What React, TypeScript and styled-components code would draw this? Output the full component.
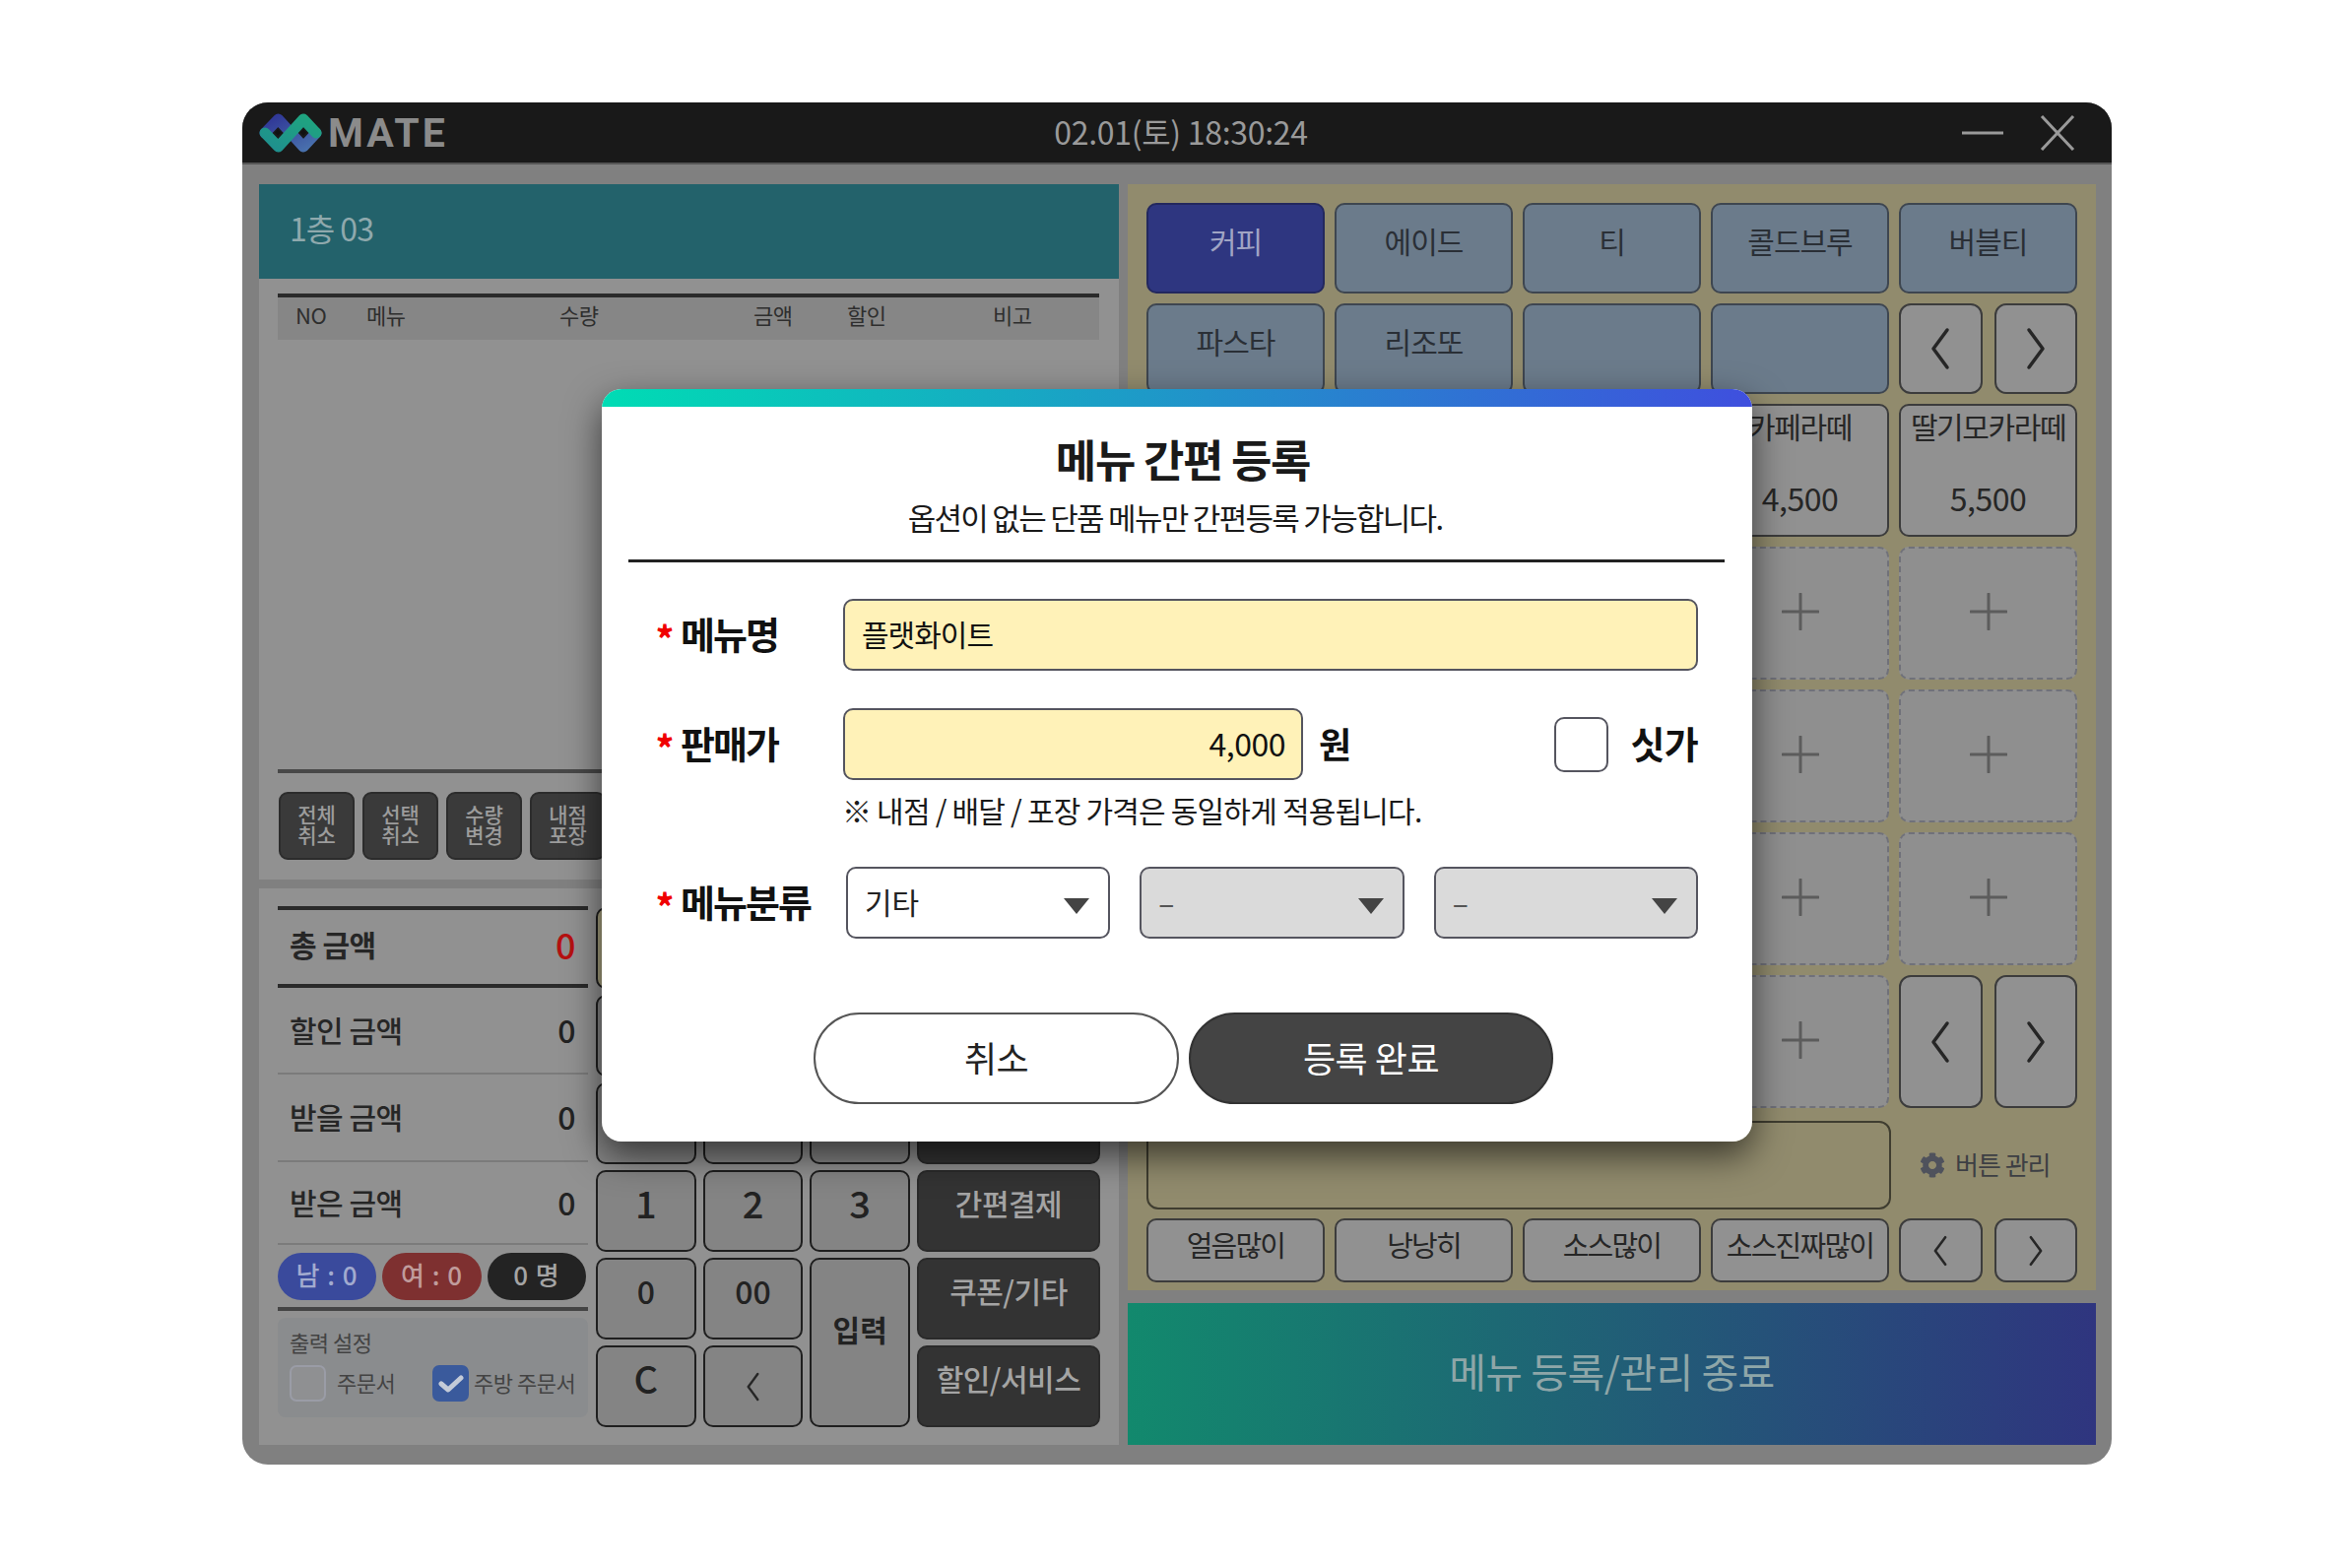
import styled, { createGlobalStyle } from "styled-components";
import { FaCog } from "react-icons/fa";

const GlobalStyle = createGlobalStyle`
  html, body {
    margin: 0;
    padding: 0;
    background: #fff;
  }
  * {
    box-sizing: border-box;
  }
  body {
    font-family: "Noto Sans CJK KR", "Noto Sans", sans-serif;
  }
`;

const Page = styled.div`
  width: 2388px;
  height: 1592px;
  padding: 104px 244px 0 246px;
  background: #fff;
`;

const Window = styled.div`
  position: relative;
  width: 1898px;
  height: 1383px;
  border-radius: 26px;
  background: #808080;
  overflow: hidden;
`;

const TitleBar = styled.div`
  height: 63px;
  display: grid;
  grid-template-columns: 1fr auto 1fr;
  align-items: center;
  padding: 0 37px 0 17px;
  background: #191919;
  border-bottom: 2px solid #555;
`;

const Brand = styled.div`
  display: flex;
  align-items: center;
  gap: 6px;
  font-family: Roboto, sans-serif;
  font-weight: 700;
  font-size: 41px;
  letter-spacing: 3px;
  color: #8b8b8b;
`;

const Clock = styled.div`
  padding: 0 0 4px 28px;
  font-size: 32px;
  letter-spacing: -0.3px;
  color: #9a9a9a;
`;

const WindowControls = styled.div`
  display: flex;
  justify-content: flex-end;
  align-items: center;
  gap: 36px;
`;

const Body = styled.div`
  display: flex;
  gap: 9px;
  padding: 20px 16px 20px 17px;
`;

const LeftColumn = styled.div`
  width: 873px;
  display: flex;
  flex-direction: column;
  gap: 9px;
`;

const OrderPanel = styled.div`
  height: 706px;
  display: flex;
  flex-direction: column;
  background: #919191;
`;

const TableName = styled.div`
  height: 96px;
  display: flex;
  align-items: center;
  padding: 0 0 8px 31px;
  font-size: 32px;
  letter-spacing: -1px;
  color: #8fa9ad;
  background: #23626b;
`;

const TableHead = styled.div`
  height: 47px;
  margin: 15px 20px 0 19px;
  display: flex;
  align-items: center;
  padding-bottom: 10px;
  border-top: 4px solid #2a2a2a;
  background: #868686;
  font-size: 22px;
  letter-spacing: -0.5px;
  color: #2e2e2e;
`;

const HeadCell = styled.span<{ $w: number }>`
  width: ${(p) => p.$w}px;
  flex-shrink: 0;
`;

const OrderList = styled.div`
  flex: 1;
  margin: 0 20px 0 19px;
  border-bottom: 4px solid #484848;
`;

const OrderActions = styled.div`
  display: flex;
  gap: 8px;
  padding: 19px 20px 20px 20px;
`;

const ActionButton = styled.div`
  width: 77px;
  height: 69px;
  display: flex;
  align-items: center;
  justify-content: center;
  padding-bottom: 3px;
  text-align: center;
  border-radius: 9px;
  border: 2px solid #2c2c2c;
  background: #3a3a3a;
  color: #9c9c9c;
  font-size: 21px;
  font-weight: 500;
  line-height: 21px;
`;

const PayPanel = styled.div`
  height: 565px;
  display: flex;
  gap: 8px;
  padding: 18px 19px 0 19px;
  background: #919191;
`;

const Totals = styled.div`
  width: 315px;
  flex-shrink: 0;
  display: flex;
  flex-direction: column;
`;

const TotalRow = styled.div<{ $h: number; $strong?: boolean }>`
  height: ${(p) => p.$h}px;
  display: flex;
  align-items: center;
  justify-content: space-between;
  padding: 0 13px ${(p) => (p.$strong ? 8 : 3)}px 12px;
  border-top: ${(p) => (p.$strong ? "4px solid #2a2a2a" : "none")};
  border-bottom: ${(p) => (p.$strong ? "4px solid #2a2a2a" : "2px solid #7b7b7b")};
  font-size: 30px;
  font-weight: ${(p) => (p.$strong ? 700 : 500)};
  letter-spacing: -0.5px;
  color: #262626;
`;

const TotalValue = styled.span<{ $red?: boolean }>`
  font-size: ${(p) => (p.$red ? 36 : 32)}px;
  font-weight: 500;
  color: ${(p) => (p.$red ? "#b51111" : "#222")};
`;

const PillRow = styled.div`
  display: flex;
  gap: 6px;
  margin-top: 8px;
  padding-bottom: 7px;
  border-bottom: 4px solid #444;
`;

const Pill = styled.div<{ $bg: string; $fg: string; $w: number }>`
  width: ${(p) => p.$w}px;
  height: 48px;
  display: flex;
  align-items: center;
  justify-content: center;
  padding-bottom: 6px;
  border-radius: 24px;
  background: ${(p) => p.$bg};
  color: ${(p) => p.$fg};
  font-size: 26px;
  font-weight: 500;
  letter-spacing: 1px;
`;

const PrintBox = styled.div`
  height: 101px;
  margin-top: 7px;
  padding: 8px 12px 0 12px;
  border-radius: 8px;
  background: #8a8c8e;
  color: #434343;
  font-size: 22px;
  letter-spacing: -0.5px;
`;

const PrintOptions = styled.div`
  display: flex;
  align-items: center;
  margin-top: 8px;
`;

const PrintCheck = styled.div<{ $checked?: boolean }>`
  width: 37px;
  height: 37px;
  flex-shrink: 0;
  display: flex;
  align-items: center;
  justify-content: center;
  border-radius: 7px;
  border: 2px solid ${(p) => (p.$checked ? "#3a5a9c" : "#9a9ca6")};
  background: ${(p) => (p.$checked ? "#3a5a9c" : "#8f9092")};
`;

const PrintLabel = styled.span<{ $gap: number; $w?: number }>`
  margin-left: ${(p) => p.$gap}px;
  width: ${(p) => (p.$w ? `${p.$w}px` : "auto")};
  padding-bottom: 4px;
  white-space: nowrap;
`;

const Keypad = styled.div`
  flex: 1;
  display: grid;
  grid-template-columns: repeat(3, 1fr) 186px;
  grid-template-rows: repeat(6, 83px);
  column-gap: 7px;
  row-gap: 6px;
  margin-top: 1px;
`;

const Key = styled.div<{ $span?: number; $size?: number; $bold?: boolean; $tint?: boolean; $flat?: boolean }>`
  grid-row: span ${(p) => p.$span || 1};
  display: flex;
  align-items: center;
  justify-content: center;
  padding-bottom: ${(p) => (p.$flat ? 0 : p.$span ? 28 : 18)}px;
  border-radius: 10px;
  border: 2px solid #1f1f1f;
  background: ${(p) => (p.$tint ? "#a39d7c" : "#848484")};
  font-size: ${(p) => p.$size || 38}px;
  font-weight: ${(p) => (p.$bold ? 700 : 500)};
  color: #222;
`;

const WideKey = styled(Key)`
  grid-column: span 4;
`;

const DarkKey = styled.div`
  display: flex;
  align-items: center;
  justify-content: center;
  padding-bottom: 18px;
  border-radius: 10px;
  background: #333;
  border: 2px solid #2a2a2a;
  color: #a4a4a4;
  font-size: 30px;
  font-weight: 500;
  letter-spacing: -0.5px;
`;

const RightColumn = styled.div`
  width: 983px;
  display: flex;
  flex-direction: column;
  gap: 13px;
`;

const MenuPanel = styled.div`
  height: 1123px;
  display: flex;
  flex-direction: column;
  padding: 19px 19px 8px 19px;
  background: #918b6d;
`;

const MenuGrid = styled.div`
  display: grid;
  grid-template-columns: repeat(5, 1fr);
  grid-template-rows: 92px 92px repeat(5, 135px);
  gap: 10px;
`;

const Tab = styled.div<{ $active?: boolean }>`
  display: flex;
  align-items: center;
  justify-content: center;
  padding-bottom: 16px;
  border-radius: 10px;
  border: 2px solid ${(p) => (p.$active ? "#23285e" : "#3e4650")};
  background: ${(p) => (p.$active ? "#2e3680" : "#6b7b8b")};
  color: ${(p) => (p.$active ? "#a0a4c4" : "#2a2f36")};
  font-size: 30px;
  letter-spacing: -1px;
`;

const MenuCard = styled.div`
  display: flex;
  flex-direction: column;
  align-items: center;
  justify-content: space-between;
  padding: 0 0 18px;
  border-radius: 10px;
  border: 2px solid #3c3c3c;
  background: #919191;
  color: #262626;
  font-size: 30px;
  line-height: 40px;
  letter-spacing: -1.4px;
`;

const Price = styled.span`
  font-size: 32px;
  letter-spacing: -0.5px;
`;

const EmptySlot = styled.div`
  display: flex;
  align-items: center;
  justify-content: center;
  padding-bottom: 4px;
  border-radius: 10px;
  border: 2px dashed #70717a;
  background: #8f8f8f;
`;

const NavPair = styled.div`
  display: flex;
  gap: 12px;
`;

const NavButton = styled.div`
  flex: 1;
  display: flex;
  align-items: center;
  justify-content: center;
  border-radius: 12px;
  border: 2px solid #3c3c3c;
  background: #919191;
`;

const OptionArea = styled.div`
  display: flex;
  align-items: center;
  margin-top: 13px;
`;

const OptionBox = styled.div`
  width: 756px;
  height: 90px;
  border-radius: 12px;
  border: 2px solid #3f3d30;
`;

const ManageLink = styled.div`
  display: flex;
  align-items: center;
  gap: 10px;
  margin-left: 29px;
  padding-bottom: 4px;
  color: #3d3f44;
  font-size: 26px;
  letter-spacing: -1px;
  white-space: nowrap;

  svg {
    color: #4f525c;
    margin-top: 4px;
  }
`;

const OptionRow = styled.div`
  display: grid;
  grid-template-columns: repeat(5, 1fr);
  grid-template-rows: 65px;
  gap: 10px;
  margin-top: 9px;
`;

const OptionButton = styled.div`
  display: flex;
  align-items: center;
  justify-content: center;
  padding-bottom: 14px;
  border-radius: 10px;
  border: 2px solid #3c3c3c;
  background: #919191;
  color: #262626;
  font-size: 29px;
  letter-spacing: -1.8px;
  white-space: nowrap;
`;

const ExitBar = styled.div`
  height: 144px;
  display: flex;
  align-items: center;
  justify-content: center;
  padding-bottom: 8px;
  background: linear-gradient(90deg, #12896d 0%, #2f357f 100%);
  color: #8ea6a8;
  font-size: 41px;
  letter-spacing: -0.5px;
`;

const Modal = styled.div`
  position: absolute;
  left: 365px;
  top: 291px;
  width: 1168px;
  height: 764px;
  border-radius: 20px;
  background: #fff;
  overflow: hidden;
`;

const ModalShadow = styled.div`
  position: absolute;
  left: 365px;
  top: 291px;
  width: 1168px;
  height: 764px;
  border-radius: 20px;
  box-shadow: 0 14px 36px rgba(0, 0, 0, 0.6);
`;

const ModalBar = styled.div`
  height: 18px;
  background: linear-gradient(90deg, #00dcb4 0%, #3f4fde 100%);
`;

const ModalTitle = styled.h2`
  margin: 23px 0 0;
  padding-left: 12px;
  text-align: center;
  font-size: 45px;
  line-height: 60px;
  font-weight: 700;
  letter-spacing: -1.3px;
  color: #1a1a1a;
`;

const ModalSub = styled.p`
  margin: 9px 0 0;
  padding-right: 4px;
  text-align: center;
  font-size: 31px;
  line-height: 40px;
  letter-spacing: -1.7px;
  color: #1a1a1a;
`;

const ModalRule = styled.div`
  height: 3px;
  margin: 23px 28px 0 27px;
  background: #222;
`;

const Form = styled.div`
  padding: 37px 55px 0 55px;
`;

const FormRow = styled.div<{ $top?: number }>`
  display: flex;
  align-items: center;
  margin-top: ${(p) => p.$top || 0}px;
`;

const FieldLabel = styled.div`
  width: 190px;
  flex-shrink: 0;
  display: flex;
  align-items: center;
  gap: 9px;
  padding-bottom: 5px;
  font-size: 38px;
  font-weight: 700;
  letter-spacing: -2px;
  color: #111;
`;

const Star = styled.span`
  font-size: 34px;
  font-weight: 900;
  line-height: 1;
  padding-top: 10px;
  color: #f00000;
`;

const TextField = styled.div<{ $w?: number; $right?: boolean }>`
  flex: ${(p) => (p.$w ? "none" : 1)};
  width: ${(p) => (p.$w ? `${p.$w}px` : "auto")};
  height: 73px;
  display: flex;
  align-items: center;
  justify-content: ${(p) => (p.$right ? "flex-end" : "flex-start")};
  padding: 0 16px 4px 17px;
  border-radius: 10px;
  border: 2px solid #55555f;
  background: #fff2b8;
  font-size: ${(p) => (p.$right ? 32 : 30)}px;
  letter-spacing: ${(p) => (p.$right ? -0.5 : -1)}px;
  color: #111;
`;

const Unit = styled.span`
  margin-left: 16px;
  padding-bottom: 4px;
  font-size: 36px;
  font-weight: 700;
  color: #111;
`;

const TaxCheck = styled.div`
  width: 55px;
  height: 56px;
  margin-left: auto;
  border-radius: 10px;
  border: 2px solid #55555f;
  background: #fff;
`;

const TaxLabel = styled.span`
  margin-left: 22px;
  padding-bottom: 4px;
  font-size: 38px;
  font-weight: 700;
  letter-spacing: -0.7px;
  color: #111;
`;

const Note = styled.p`
  margin: 15px 0 0 189px;
  font-size: 30px;
  line-height: 30px;
  letter-spacing: -0.8px;
  color: #1a1a1a;
  white-space: nowrap;
`;

const SelectGroup = styled.div`
  flex: 1;
  display: flex;
  gap: 30px;
  margin-left: 3px;
`;

const SelectBox = styled.div<{ $disabled?: boolean }>`
  flex: 1;
  height: 73px;
  display: flex;
  align-items: center;
  justify-content: space-between;
  padding: 0 19px 4px 17px;
  border-radius: 10px;
  border: 2px solid #55555f;
  background: ${(p) => (p.$disabled ? "#dadada" : "#fff")};
  color: ${(p) => (p.$disabled ? "#555" : "#222")};
  font-size: 30px;
`;

const Caret = styled.span`
  width: 0;
  height: 0;
  margin-top: 10px;
  border-left: 13px solid transparent;
  border-right: 13px solid transparent;
  border-top: 16px solid #444;
`;

const ModalButtons = styled.div`
  display: flex;
  gap: 10px;
  margin: 75px 0 0 215px;
`;

const PillButton = styled.div<{ $dark?: boolean }>`
  width: ${(p) => (p.$dark ? 370 : 371)}px;
  height: 93px;
  display: flex;
  align-items: center;
  justify-content: center;
  padding-bottom: 4px;
  border-radius: 47px;
  border: 2px solid ${(p) => (p.$dark ? "#333" : "#555")};
  background: ${(p) => (p.$dark ? "#444" : "#fff")};
  color: ${(p) => (p.$dark ? "#fff" : "#222")};
  font-size: 36px;
  letter-spacing: -0.5px;
`;

function Logo() {
  return (
    <svg width="64" height="40" viewBox="0 0 64 40" fill="none">
      <defs>
        <linearGradient id="logoBlue" x1="0" y1="0" x2="1" y2="1">
          <stop offset="0" stopColor="#2f3596" />
          <stop offset="1" stopColor="#4a73ae" />
        </linearGradient>
        <linearGradient id="logoTeal" x1="0" y1="1" x2="1" y2="0">
          <stop offset="0" stopColor="#1f8f8e" />
          <stop offset="1" stopColor="#1fa57f" />
        </linearGradient>
      </defs>
      <path d="M6 20L19.5 6L45 34L58 20" stroke="url(#logoBlue)" strokeWidth="11" strokeLinejoin="round" strokeLinecap="round" />
      <path d="M6 20L19.5 34L45 6L58 20" stroke="url(#logoTeal)" strokeWidth="11" strokeLinejoin="round" strokeLinecap="round" />
      <path d="M19 16.5L22 19.5L19 22.5L16 19.5Z M45 16.5L48 19.5L45 22.5L42 19.5Z" fill="#111" />
    </svg>
  );
}

function Chevron({ dir, size = 44 }: { dir: "left" | "right"; size?: number }) {
  return (
    <svg width={size / 2} height={size} viewBox="0 0 22 44" fill="none">
      <path
        d={dir === "left" ? "M18 3L4 22L18 41" : "M4 3L18 22L4 41"}
        stroke="#262626"
        strokeWidth="3.5"
        strokeLinecap="round"
        strokeLinejoin="round"
      />
    </svg>
  );
}

function Plus() {
  return (
    <svg width="38" height="38" viewBox="0 0 38 38">
      <path d="M19 1V37M1 19H37" stroke="#5c5c5c" strokeWidth="3" strokeLinecap="round" />
    </svg>
  );
}

const headCells = [
  { label: "NO", w: 72 },
  { label: "메뉴", w: 196 },
  { label: "수량", w: 197 },
  { label: "금액", w: 95 },
  { label: "할인", w: 148 },
  { label: "비고", w: 60 },
];

const orderActions = [
  ["전체", "취소"],
  ["선택", "취소"],
  ["수량", "변경"],
  ["내점", "포장"],
];

const optionNames = ["얼음많이", "낭낭히", "소스많이", "소스진짜많이"];

function NavButtons({ size }: { size?: number }) {
  return (
    <NavPair>
      <NavButton><Chevron dir="left" size={size} /></NavButton>
      <NavButton><Chevron dir="right" size={size} /></NavButton>
    </NavPair>
  );
}

function SlotRow() {
  return (
    <>
      <EmptySlot />
      <EmptySlot />
      <EmptySlot />
      <EmptySlot><Plus /></EmptySlot>
    </>
  );
}

export default function App() {
  return (
    <Page>
      <GlobalStyle />
      <Window>
        <TitleBar>
          <Brand><Logo />MATE</Brand>
          <Clock>02.01(토) 18:30:24</Clock>
          <WindowControls>
            <svg width="44" height="6" viewBox="0 0 44 6">
              <path d="M1 3H43" stroke="#9a9a9a" strokeWidth="3" />
            </svg>
            <svg width="36" height="36" viewBox="0 0 36 36">
              <path d="M2 1L34 35M34 1L2 35" stroke="#9a9a9a" strokeWidth="3" />
            </svg>
          </WindowControls>
        </TitleBar>
        <Body>
          <LeftColumn>
            <OrderPanel>
              <TableName>1층 03</TableName>
              <TableHead>
                <HeadCell $w={18} />
                {headCells.map((c) => (
                  <HeadCell key={c.label} $w={c.w}>{c.label}</HeadCell>
                ))}
              </TableHead>
              <OrderList />
              <OrderActions>
                {orderActions.map((a) => (
                  <ActionButton key={a.join("")}>{a[0]}<br />{a[1]}</ActionButton>
                ))}
              </OrderActions>
            </OrderPanel>
            <PayPanel>
              <Totals>
                <TotalRow $h={83} $strong>총 금액<TotalValue $red>0</TotalValue></TotalRow>
                <TotalRow $h={88}>할인 금액<TotalValue>0</TotalValue></TotalRow>
                <TotalRow $h={89}>받을 금액<TotalValue>0</TotalValue></TotalRow>
                <TotalRow $h={84}>받은 금액<TotalValue>0</TotalValue></TotalRow>
                <PillRow>
                  <Pill $bg="#3a4a9c" $fg="#a2abcf" $w={100}>남 : 0</Pill>
                  <Pill $bg="#7e3030" $fg="#c09c9c" $w={101}>여 : 0</Pill>
                  <Pill $bg="#232323" $fg="#a4a4a4" $w={100}>0 명</Pill>
                </PillRow>
                <PrintBox>
                  출력 설정
                  <PrintOptions>
                    <PrintCheck />
                    <PrintLabel $gap={11} $w={97}>주문서</PrintLabel>
                    <PrintCheck $checked>
                      <svg width="26" height="20" viewBox="0 0 26 20" fill="none">
                        <path d="M3 10L10 16L23 4" stroke="#c4cbd8" strokeWidth="5" strokeLinecap="round" strokeLinejoin="round" />
                      </svg>
                    </PrintCheck>
                    <PrintLabel $gap={5}>주방 주문서</PrintLabel>
                  </PrintOptions>
                </PrintBox>
              </Totals>
              <Keypad>
                <WideKey $tint />
                <Key /><Key /><Key /><DarkKey />
                <Key /><Key /><Key /><DarkKey />
                <Key>1</Key><Key>2</Key><Key>3</Key>
                <DarkKey>간편결제</DarkKey>
                <Key $size={32}>0</Key><Key $size={32}>00</Key>
                <Key $span={2} $size={30} $bold>입력</Key>
                <DarkKey>쿠폰/기타</DarkKey>
                <Key>C</Key>
                <Key $flat><Chevron dir="left" size={30} /></Key>
                <DarkKey>할인/서비스</DarkKey>
              </Keypad>
            </PayPanel>
          </LeftColumn>
          <RightColumn>
            <MenuPanel>
              <MenuGrid>
                <Tab $active>커피</Tab>
                <Tab>에이드</Tab>
                <Tab>티</Tab>
                <Tab>콜드브루</Tab>
                <Tab>버블티</Tab>
                <Tab>파스타</Tab>
                <Tab>리조또</Tab>
                <Tab />
                <Tab />
                <NavButtons />
                <EmptySlot />
                <EmptySlot />
                <EmptySlot />
                <MenuCard>카페라떼<Price>4,500</Price></MenuCard>
                <MenuCard>딸기모카라떼<Price>5,500</Price></MenuCard>
                <SlotRow />
                <EmptySlot><Plus /></EmptySlot>
                <SlotRow />
                <EmptySlot><Plus /></EmptySlot>
                <SlotRow />
                <EmptySlot><Plus /></EmptySlot>
                <SlotRow />
                <NavButtons />
              </MenuGrid>
              <OptionArea>
                <OptionBox />
                <ManageLink><FaCog size={26} />버튼 관리</ManageLink>
              </OptionArea>
              <OptionRow>
                {optionNames.map((n) => (
                  <OptionButton key={n}>{n}</OptionButton>
                ))}
                <NavButtons size={32} />
              </OptionRow>
            </MenuPanel>
            <ExitBar>메뉴 등록/관리 종료</ExitBar>
          </RightColumn>
        </Body>
        <ModalShadow />
        <Modal>
          <ModalBar />
          <ModalTitle>메뉴 간편 등록</ModalTitle>
          <ModalSub>옵션이 없는 단품 메뉴만 간편등록 가능합니다.</ModalSub>
          <ModalRule />
          <Form>
            <FormRow>
              <FieldLabel><Star>*</Star>메뉴명</FieldLabel>
              <TextField>플랫화이트</TextField>
            </FormRow>
            <FormRow $top={38}>
              <FieldLabel><Star>*</Star>판매가</FieldLabel>
              <TextField $w={467} $right>4,000</TextField>
              <Unit>원</Unit>
              <TaxCheck />
              <TaxLabel>싯가</TaxLabel>
            </FormRow>
            <Note>※ 내점 / 배달 / 포장 가격은 동일하게 적용됩니다.</Note>
            <FormRow $top={43}>
              <FieldLabel><Star>*</Star>메뉴분류</FieldLabel>
              <SelectGroup>
                <SelectBox>기타<Caret /></SelectBox>
                <SelectBox $disabled>–<Caret /></SelectBox>
                <SelectBox $disabled>–<Caret /></SelectBox>
              </SelectGroup>
            </FormRow>
          </Form>
          <ModalButtons>
            <PillButton>취소</PillButton>
            <PillButton $dark>등록 완료</PillButton>
          </ModalButtons>
        </Modal>
      </Window>
    </Page>
  );
}
